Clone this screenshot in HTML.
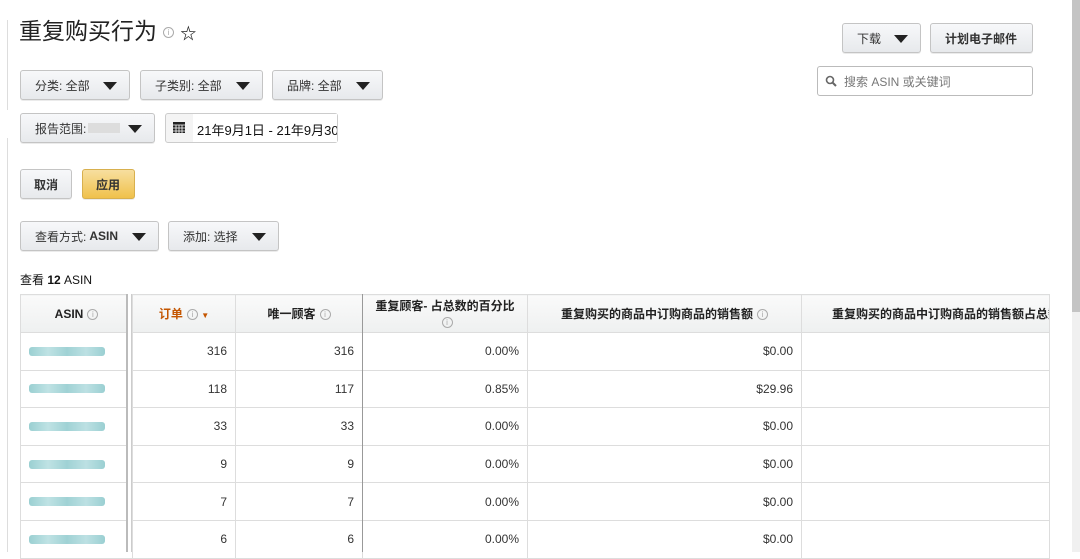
<!DOCTYPE html>
<html><head><meta charset="utf-8"><style>
*{box-sizing:border-box;margin:0;padding:0}
body{width:1080px;height:552px;overflow:hidden;background:#fff;font-family:"Liberation Sans","Noto Sans CJK SC",sans-serif;color:#111;position:relative;font-size:12px}
.a{position:absolute}
.btn{position:absolute;height:30px;border:1px solid #c4c4c4;border-radius:3px;background:linear-gradient(#f7f8fa,#e7e9ec);font-size:12px;color:#333;display:flex;align-items:center;padding-left:14px;box-shadow:0 1px 0 rgba(0,0,0,.08)}
.tri{position:absolute;right:12px;top:11px;width:0;height:0;border-left:7px solid transparent;border-right:7px solid transparent;border-top:8px solid #222}
.i{display:inline-block;width:11px;height:11px;border:1px solid #aaa;border-radius:50%;font-size:8px;line-height:9px;text-align:center;color:#aaa;vertical-align:middle;margin-left:4px;font-weight:normal}
table{position:absolute;left:20px;top:294px;border-collapse:collapse;table-layout:fixed;width:1029px}
td,th{border:1px solid #ddd;height:37.6px;font-size:12px;color:#333;padding:0 8px}
th{background:linear-gradient(#fafafa,#eef0f0);font-weight:bold;height:38px;color:#222}
td{text-align:right}
.blur{display:block;width:76px;height:9px;background:linear-gradient(90deg,#8fcacd,#b8dfe1,#95cdd0,#b5dde0,#8fcacd);border-radius:3px;opacity:.9}
</style></head><body>
<div class="a" style="left:7px;top:20px;width:1px;height:90px;background:#ddd"></div>
<div class="a" style="left:7px;top:138px;width:1px;height:414px;background:#ddd"></div>
<div class="a" style="left:19px;top:12px;font-size:23px;color:#222">重复购买行为<span class="i" style="margin-left:6px">i</span> <span style="font-size:16px;font-weight:bold">☆</span></div>
<div class="btn" style="left:842px;top:23px;width:79px">下载<div class="tri"></div></div>
<div class="btn" style="left:930px;top:23px;width:103px;font-weight:bold;padding-left:14px">计划电子邮件</div>
<div class="a" style="left:817px;top:66px;width:216px;height:30px;border:1px solid #bbb;border-radius:3px;font-size:12px;color:#777;padding:6px 0 0 26px">搜索 ASIN 或关键词
<svg class="a" style="left:7px;top:8px" width="12" height="12" viewBox="0 0 12 12"><circle cx="5" cy="5" r="3.5" fill="none" stroke="#666" stroke-width="1.6"/><path d="M7.5 7.5L11 11" stroke="#666" stroke-width="2"/></svg></div>
<div class="btn" style="left:20px;top:70px;width:110px">分类: 全部<div class="tri"></div></div>
<div class="btn" style="left:140px;top:70px;width:123px">子类别: 全部<div class="tri"></div></div>
<div class="btn" style="left:272px;top:70px;width:111px">品牌: 全部<div class="tri"></div></div>
<div class="btn" style="left:20px;top:113px;width:135px">报告范围:<span style="display:inline-block;width:32px;height:10px;background:#ddd;margin-left:2px"></span><div class="tri"></div></div>
<div class="a" style="left:165px;top:113px;width:173px;height:30px;border:1px solid #ccc;border-radius:3px;background:#f4f4f4"></div>
<div class="a" style="left:193px;top:114px;width:144px;height:28px;background:#fff;font-size:13px;padding:6px 0 0 4px;overflow:hidden;white-space:nowrap">21年9月1日 - 21年9月30</div>
<svg class="a" style="left:172px;top:120px" width="14" height="14" viewBox="0 0 14 14"><rect x="1" y="2" width="12" height="11" fill="#222"/><path d="M1 5h12M4 5v8M7 5v8M10 5v8M1 8h12M1 11h12" stroke="#fff" stroke-width=".8"/></svg>
<div class="btn" style="left:20px;top:169px;width:52px;font-weight:bold;padding-left:13px">取消</div>
<div class="btn" style="left:82px;top:169px;width:53px;font-weight:bold;background:linear-gradient(#f7df9f,#f0c14b);border-color:#d8b04e;padding-left:13px">应用</div>
<div class="btn" style="left:20px;top:221px;width:139px">查看方式: <b style="margin-left:3px">ASIN</b><div class="tri"></div></div>
<div class="btn" style="left:168px;top:221px;width:111px">添加: 选择<div class="tri"></div></div>
<div class="a" style="left:20px;top:271px;font-size:12px">查看 <b>12</b> ASIN</div>
<table>
<colgroup><col style="width:112px"><col style="width:103px"><col style="width:127px"><col style="width:165px"><col style="width:274px"><col style="width:248px"></colgroup>
<tr><th>ASIN<span class="i">i</span></th><th style="color:#c45500">订单<span class="i">i</span> <span style="font-size:8px">▼</span></th><th>唯一顾客<span class="i">i</span></th><th style="vertical-align:top;padding-top:3px;line-height:16px">重复顾客- 占总数的百分比<br><span class="i">i</span></th><th>重复购买的商品中订购商品的销售额<span class="i">i</span></th><th style="white-space:nowrap;overflow:hidden;text-align:left;padding-left:30px">重复购买的商品中订购商品的销售额占总数</th></tr>
<tr><td style="text-align:left"><span class="blur"></span></td><td>316</td><td>316</td><td>0.00%</td><td>$0.00</td><td></td></tr>
<tr><td style="text-align:left"><span class="blur"></span></td><td>118</td><td>117</td><td>0.85%</td><td>$29.96</td><td></td></tr>
<tr><td style="text-align:left"><span class="blur"></span></td><td>33</td><td>33</td><td>0.00%</td><td>$0.00</td><td></td></tr>
<tr><td style="text-align:left"><span class="blur"></span></td><td>9</td><td>9</td><td>0.00%</td><td>$0.00</td><td></td></tr>
<tr><td style="text-align:left"><span class="blur"></span></td><td>7</td><td>7</td><td>0.00%</td><td>$0.00</td><td></td></tr>
<tr><td style="text-align:left"><span class="blur"></span></td><td>6</td><td>6</td><td>0.00%</td><td>$0.00</td><td></td></tr>
</table>
<div class="a" style="left:126px;top:294px;width:6px;height:258px;border-left:2px solid #bbb;border-right:1px solid #ccc;background:#fff"></div>
<div class="a" style="left:362px;top:294px;width:1px;height:258px;background:#999"></div>
<div class="a" style="left:1072px;top:0;width:8px;height:552px;background:#f0f0f0"></div>
<div class="a" style="left:1072px;top:0;width:8px;height:312px;background:#c4c4c4"></div>
</body></html>
